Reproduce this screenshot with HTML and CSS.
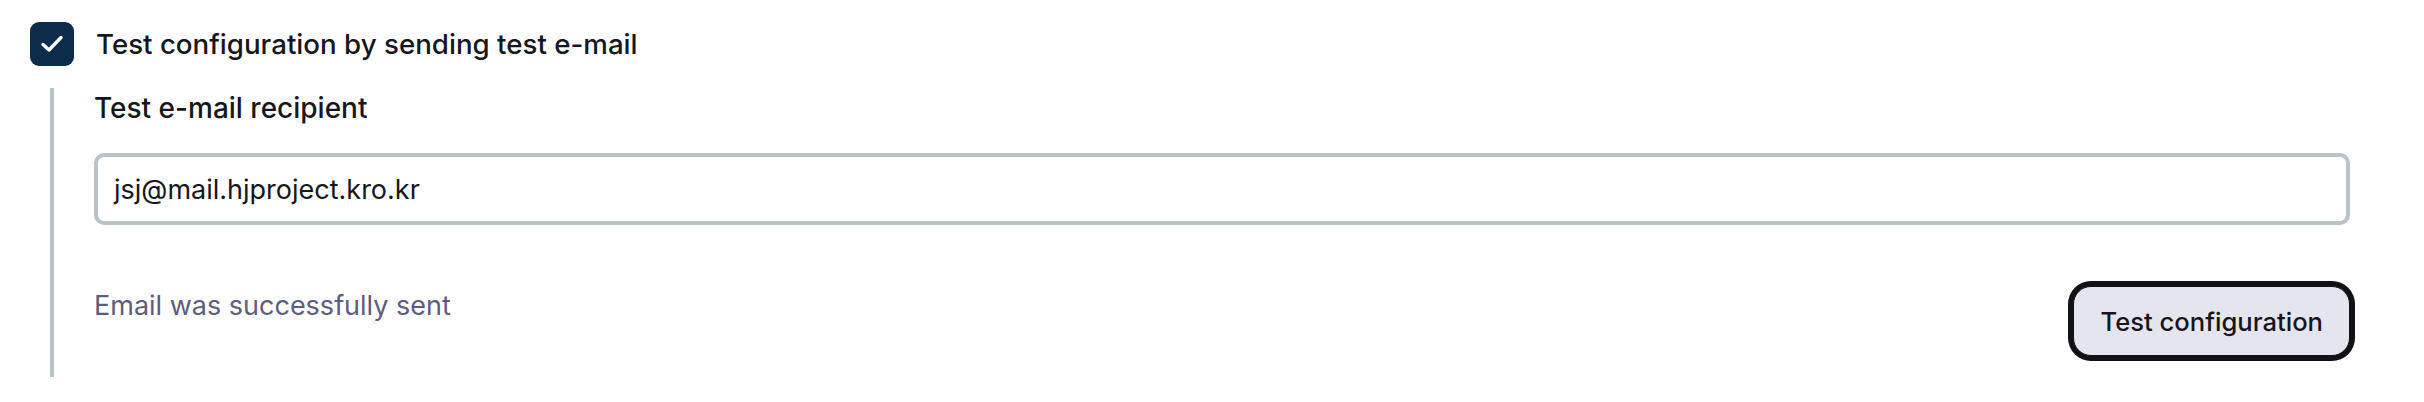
FILE: index.html
```html
<!DOCTYPE html>
<html>
<head>
    <title>Mail settings</title>
    <link rel="stylesheet" href="styles.css">
</head>
<body>
    <div class="panel">
        <label class="check-row">
            <span class="checkbox">
                <svg width="24" height="20" viewBox="0 0 24 20">
                    <path d="M3 10.5 L9 16 L21 3.5" fill="none" stroke="#fff" stroke-width="3.4" stroke-linecap="round" stroke-linejoin="round"/>
                </svg>
            </span>
            <span class="check-text">Test configuration by sending test e-mail</span>
        </label>

        <div class="nested">
            <div class="field-label">Test e-mail recipient</div>
            <div class="input">jsj@mail.hjproject.kro.kr</div>

            <div class="action-row">
                <div class="helper">Email was successfully sent</div>
                <button class="btn">Test configuration</button>
            </div>
        </div>
    </div>
</body>
</html>
```

FILE: styles.css
```css
body {
    margin: 0;
    background: #fff;
    font-family: Inter, "Noto Sans", sans-serif;
    color: #16161d;
}
.panel {
    padding: 22px 74px 0 30px;
}
.check-row {
    display: flex;
    align-items: center;
    gap: 22px;
    height: 44px;
}
.checkbox {
    width: 44px;
    height: 44px;
    border-radius: 9px;
    background: #0d2c4b;
    display: flex;
    align-items: center;
    justify-content: center;
}
.check-text {
    font-size: 27.7px;
    font-weight: 500;
}
.nested {
    margin: 22px 0 0 20px;
    border-left: 4px solid #b9c2c8;
    padding: 0 0 21px 40px;
}
.field-label {
    font-size: 28px;
    font-weight: 500;
    line-height: 40px;
}
.input {
    margin-top: 25px;
    height: 64px;
    border: 4px solid #bac3c8;
    border-radius: 10px;
    padding: 0 16px;
    display: flex;
    align-items: center;
    font-size: 27px;
}
.action-row {
    margin-top: 61px;
    display: flex;
    justify-content: space-between;
    align-items: flex-start;
}
.helper {
    font-size: 27px;
    line-height: 40px;
    color: #5d5d7b;
}
.btn {
    height: 70px;
    padding: 0 26px;
    border: 1px solid #111218;
    box-shadow: 0 0 0 5px #111218;
    border-radius: 18px;
    background: #e5e5f0;
    font-family: Inter, "Noto Sans", sans-serif;
    font-size: 25.6px;
    font-weight: 500;
    color: #16161d;
}
```
